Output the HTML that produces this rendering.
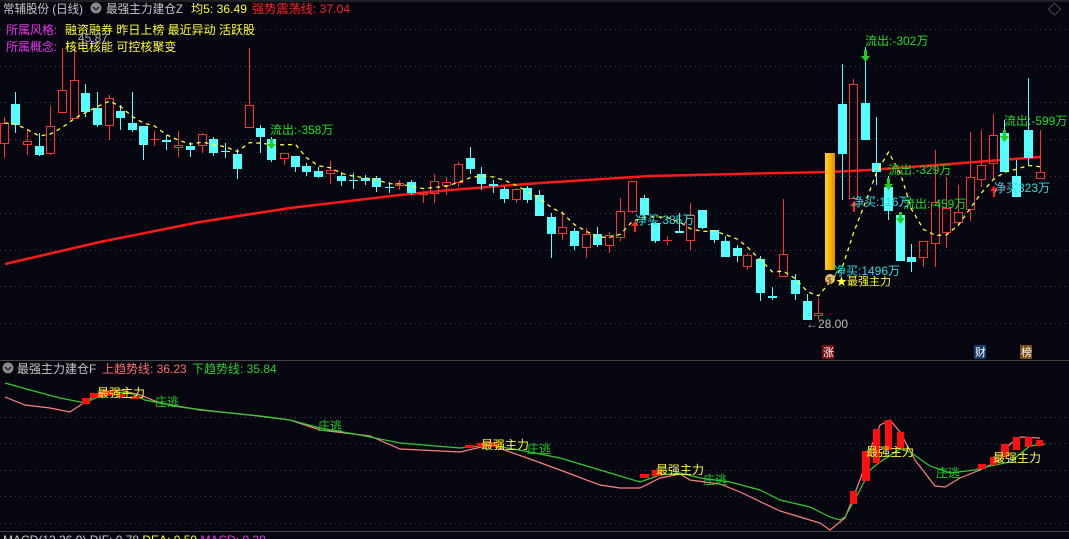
<!DOCTYPE html>
<html><head><meta charset="utf-8">
<style>
html,body{margin:0;padding:0;background:#05060f;width:1069px;height:539px;overflow:hidden}
svg{display:block}
text{font-family:"Liberation Sans","Noto Sans CJK SC",sans-serif}
</style></head>
<body>
<svg id="s" width="1069" height="539" viewBox="0 0 1069 539" xmlns="http://www.w3.org/2000/svg">
<defs>
<linearGradient id="gold" x1="0" x2="1" y1="0" y2="0">
<stop offset="0" stop-color="#ffd21e"/><stop offset="0.5" stop-color="#ffb400"/><stop offset="1" stop-color="#e08a00"/>
</linearGradient>
</defs>
<rect width="1069" height="539" fill="#05060f"/>
<line x1="0" y1="1" x2="1069" y2="1" stroke="#3a3a3a"/>
<g id="grid" stroke="#3a3f4a" stroke-dasharray="1,4"></g>
<line x1="0" y1="360.5" x2="1069" y2="360.5" stroke="#444" />
<line x1="0" y1="531.5" x2="1069" y2="531.5" stroke="#444" />
<g id="lower"></g>
<polyline fill="none" stroke="#ff1a1a" stroke-width="2.5" points="5,264 100,242 200,222 290,208 400,195 450,190 540,183 650,176 780,173 830,172 870,170 950,164 1040,157"/>
<g id="candles"></g>
<polyline id="ma5" fill="none" stroke="#ffff33" stroke-width="1.3" stroke-dasharray="4,4"/>
<rect x="825" y="153" width="10" height="117" fill="url(#gold)"/>

<!-- header -->
<text x="3" y="13" font-size="12" fill="#c8c8c8" textLength="80" lengthAdjust="spacingAndGlyphs">常辅股份 (日线)</text>
<circle cx="96" cy="8" r="5.5" fill="#8a8a8a"/><path d="M93,7 l3,3 l3,-3" stroke="#222" stroke-width="1.3" fill="none"/>
<text x="106" y="13" font-size="12" fill="#c8c8c8" textLength="77" lengthAdjust="spacingAndGlyphs">最强主力建仓Z</text>
<text x="191" y="13" font-size="12" fill="#ffff33" textLength="56" lengthAdjust="spacingAndGlyphs">均5: 36.49</text>
<text x="252" y="13" font-size="12" fill="#ff2020" textLength="98" lengthAdjust="spacingAndGlyphs">强势震荡线: 37.04</text>
<text x="1048" y="14" font-size="13" fill="#888">◇</text>
<text x="6" y="34" font-size="12" fill="#ee33ee">所属风格:</text>
<text x="65" y="34" font-size="12" fill="#ffff33">融资融券 昨日上榜 最近异动 活跃股</text>
<text x="6" y="51" font-size="12" fill="#ee33ee">所属概念:</text>
<text x="65" y="51" font-size="12" fill="#ffff33">核电核能 可控核聚变</text>
<text x="78" y="42" font-size="12" fill="#aaa">45.87</text>

<!-- annotations -->
<g font-size="12" fill="#22dd22">
<text x="270" y="134">流出:-358万</text>
<text x="865" y="45">流出:-302万</text>
<text x="888" y="174">流出:-329万</text>
<text x="903" y="208">流出:-459万</text>
<text x="1004" y="125">流出:-599万</text>
</g>
<g fill="#22cc22">
<path d="M270,139 h3 v5 h3 l-4.5,5 l-4.5,-5 h3z"/>
<path d="M864,50 h3 v6 h3 l-4.5,6 l-4.5,-6 h3z"/>
<path d="M887,178 h3 v6 h3 l-4.5,6 l-4.5,-6 h3z"/>
<path d="M899,212 h3 v6 h3 l-4.5,6 l-4.5,-6 h3z"/>
<path d="M1003,130 h3 v6 h3 l-4.5,6 l-4.5,-6 h3z"/>
</g>
<g fill="#ff2020">
<path d="M634,232 h2 v-6 h3 l-4,-5 l-4,5 h3z"/>
<path d="M853,212 h2 v-6 h3 l-4,-5 l-4,5 h3z"/>
<path d="M993,197 h2 v-6 h3 l-4,-5 l-4,5 h3z"/>
</g>
<g font-size="12" fill="#33dddd">
<text x="635" y="224">净买:385万</text>
<text x="852" y="206">净买:116万</text>
<text x="834" y="275">净买:1496万</text>
<text x="994" y="192">净买323万</text>
</g>
<circle cx="830" cy="279" r="5" fill="#e8c070"/><text x="827" y="283" font-size="8" fill="#553300">$</text>
<text x="836" y="285" font-size="11" fill="#ffff33">★最强主力</text>
<text x="806" y="328" font-size="12" fill="#bbbbbb">←28.00</text>

<rect x="822" y="345" width="12" height="14" fill="#7a0d0d"/><text x="823" y="356" font-size="11" fill="#fff">涨</text>
<rect x="974" y="345" width="12" height="14" fill="#0d3a6a"/><text x="975" y="356" font-size="11" fill="#fff">财</text>
<rect x="1020" y="345" width="12" height="14" fill="#7a4a10"/><text x="1021" y="356" font-size="11" fill="#fff">榜</text>

<!-- lower header -->
<circle cx="8" cy="368" r="5.5" fill="#8a8a8a"/><path d="M5,367 l3,3 l3,-3" stroke="#222" stroke-width="1.3" fill="none"/>
<text x="17" y="373" font-size="12" fill="#c8c8c8">最强主力建仓F</text>
<text x="102" y="373" font-size="12" fill="#ff6f6f">上趋势线: 36.23</text>
<text x="192" y="373" font-size="12" fill="#33cc33">下趋势线: 35.84</text>
<g font-size="12" fill="#ffff33">
<text x="97" y="397">最强主力</text>
<text x="481" y="449">最强主力</text>
<text x="656" y="474">最强主力</text>
<text x="866" y="456">最强主力</text>
<text x="993" y="462">最强主力</text>
</g>
<g font-size="12" fill="#22cc22">
<text x="155" y="406">庄逃</text>
<text x="318" y="430">庄逃</text>
<text x="527" y="453">庄逃</text>
<text x="703" y="484">庄逃</text>
<text x="936" y="477">庄逃</text>
</g>
<text x="3" y="544" font-size="12" fill="#ccc">MACD(12,26,9) DIF: 0.78 <tspan fill="#ffff33">DEA: 0.59</tspan> <tspan fill="#ee33ee">MACD: 0.38</tspan></text>
</svg>
<script>
var NS="http://www.w3.org/2000/svg";
function el(p,t,a){var e=document.createElementNS(NS,t);for(var k in a)e.setAttribute(k,a[k]);p.appendChild(e);return e;}
var g=document.getElementById('grid');
[29,66,102,139,176,213,250,286,323,417,443,470,496,523].forEach(function(y){el(g,'line',{x1:0,x2:1069,y1:y+.5,y2:y+.5});});
var C=[
[0,123,143,117,158,'r'],[11,104,125,92,133,'c'],[23,141,144,130,155,'r'],[35,146,155,133,156,'c'],
[46,126,153,106,155,'r'],[58,90,112,48,112,'r'],[70,80,118,45,118,'r'],[81,93,112,84,117,'c'],
[93,108,125,92,127,'c'],[105,98,125,95,140,'r'],[116,111,118,105,130,'c'],[128,123,130,92,132,'c'],
[139,126,145,126,160,'c'],[150,139,140,131,146,'r'],[162,140,142,135,150,'c'],[174,145,147,131,157,'r'],[186,146,150,142,157,'c'],
[198,134,145,133,153,'r'],[209,139,153,137,156,'c'],[221,151,152,143,158,'c'],[233,154,169,149,179,'c'],
[245,105,127,48,127,'r'],[256,128,137,125,153,'c'],[267,139,160,137,162,'c'],[280,153,158,153,165,'r'],
[291,156,167,156,172,'c'],[302,166,172,163,176,'c'],[314,171,177,167,178,'c'],[326,170,173,161,184,'r'],
[337,176,181,172,186,'c'],[349,180,181,173,189,'c'],[361,178,181,175,185,'c'],[372,178,187,176,192,'c'],
[385,187,188,182,193,'c'],[395,183,185,180,190,'r'],[407,182,193,180,195,'c'],[419,192,194,191,203,'r'],
[430,181,193,174,203,'r'],[442,182,185,177,195,'r'],[454,164,182,162,187,'r'],[466,158,169,147,174,'c'],
[477,174,184,167,190,'c'],[489,184,186,180,193,'c'],[500,189,199,187,203,'c'],[512,189,199,188,203,'r'],
[523,188,200,186,203,'c'],[535,195,216,190,216,'c'],[547,217,234,213,258,'c'],[558,227,233,211,240,'r'],
[570,231,246,228,250,'c'],[582,234,247,228,258,'r'],[593,234,245,227,247,'c'],[605,235,245,232,253,'r'],
[616,211,237,198,241,'r'],[628,181,211,181,213,'r'],[640,198,215,195,220,'c'],[651,223,241,222,243,'c'],
[663,240,241,236,245,'r'],[675,231,233,213,233,'c'],[686,215,240,203,250,'r'],[698,210,228,210,229,'c'],
[710,230,240,230,243,'c'],[721,241,257,236,257,'c'],[733,248,256,245,262,'c'],[743,255,266,253,270,'r'],[756,259,293,256,301,'c'],
[768,296,298,287,300,'c'],[779,254,276,199,276,'r'],[791,280,294,274,300,'c'],[803,301,320,294,320,'c'],
[814,313,315,298,320,'r'],[838,104,154,64,200,'c'],[849,84,198,79,198,'r'],[861,103,140,47,140,'c'],
[872,163,172,117,185,'c'],[884,187,211,176,220,'c'],[896,215,261,213,261,'c'],[907,257,262,244,272,'c'],
[919,241,257,241,267,'r'],[931,202,243,150,267,'r'],[942,208,232,177,248,'r'],[954,212,222,185,226,'r'],
[966,177,209,132,221,'r'],[977,165,179,130,187,'r'],[989,135,163,114,180,'r'],[1000,133,172,120,172,'c'],
[1012,176,197,160,197,'c'],[1024,130,158,78,165,'c'],[1036,172,178,130,178,'r']
];
var cg=document.getElementById('candles');var pts=[],closes=[];
C.forEach(function(c){
 var x=c[0],col=c[5]=='r'?'#ff3030':'#55ffff',cx=x+4.5;
 var h=c[2]-c[1];
 if(c[5]=='r'){
  el(cg,'line',{x1:cx,x2:cx,y1:c[3],y2:c[1],stroke:col});
  el(cg,'line',{x1:cx,x2:cx,y1:c[2],y2:c[4],stroke:col});
  if(h<2)el(cg,'line',{x1:x,x2:x+9,y1:c[1]+.5,y2:c[1]+.5,stroke:col});
  else el(cg,'rect',{x:x+.5,y:c[1]+.5,width:8,height:h,fill:'none',stroke:col});
  closes.push(c[1]);
 }else{
  el(cg,'line',{x1:cx,x2:cx,y1:c[3],y2:c[4],stroke:col});
  if(h<2)el(cg,'line',{x1:x,x2:x+9,y1:c[1]+.5,y2:c[1]+.5,stroke:col});
  else el(cg,'rect',{x:x,y:c[1],width:9,height:h,fill:col});
  closes.push(c[2]);
 }
 var n=closes.length,s=0,k=Math.min(5,n);for(var i=n-k;i<n;i++)s+=closes[i];
 pts.push(cx+','+(s/k).toFixed(1));
});
document.getElementById('ma5').setAttribute('points',pts.join(' '));
var L=document.getElementById('lower');
el(L,'polyline',{fill:'none',stroke:'#ff8080','stroke-width':1.2,points:"5,397 25,405 50,408 70,412 85,402 100,393 120,390 140,395 160,403 200,410 250,415 290,420 320,430 370,436 400,449 460,452 490,445 530,459 560,470 600,485 620,488 640,488 660,478 680,474 690,480 720,484 740,492 780,511 800,517 820,523 830,530 845,518 860,480 870,450 880,425 890,420 900,432 915,460 935,486 945,487 960,478 980,470 1000,460 1010,444 1020,437 1040,438"});
el(L,'polyline',{fill:'none',stroke:'#33cc33','stroke-width':1.2,points:"5,383 30,390 60,398 85,403 100,396 115,392 130,393 145,400 180,407 220,412 260,416 290,420 320,428 360,435 400,443 460,448 490,445 530,452 560,458 600,470 620,476 640,482 660,475 680,473 700,478 730,482 760,490 780,500 810,507 830,517 840,520 845,517 860,490 870,470 880,462 900,449 910,452 930,466 950,473 975,470 990,466 1010,462 1030,446 1045,444"});
[[82,398,8,6],[90,393,12,5],[103,390,12,6],[117,393,8,4],[130,396,10,3],[465,445,9,3],[477,443,10,4],[489,442,10,5],[640,474,9,4],[652,470,10,6],
[850,491,7,13],[862,451,8,30],[873,429,7,34],[885,420,7,30],[897,432,7,17],[978,464,8,5],[990,457,7,8],[1001,444,8,13],[1013,437,7,13],[1025,437,7,10],[1036,440,7,6]
].forEach(function(b){el(L,'rect',{x:b[0],y:b[1],width:b[2],height:b[3],fill:'#ff1010'});});
</script>
</body></html>
